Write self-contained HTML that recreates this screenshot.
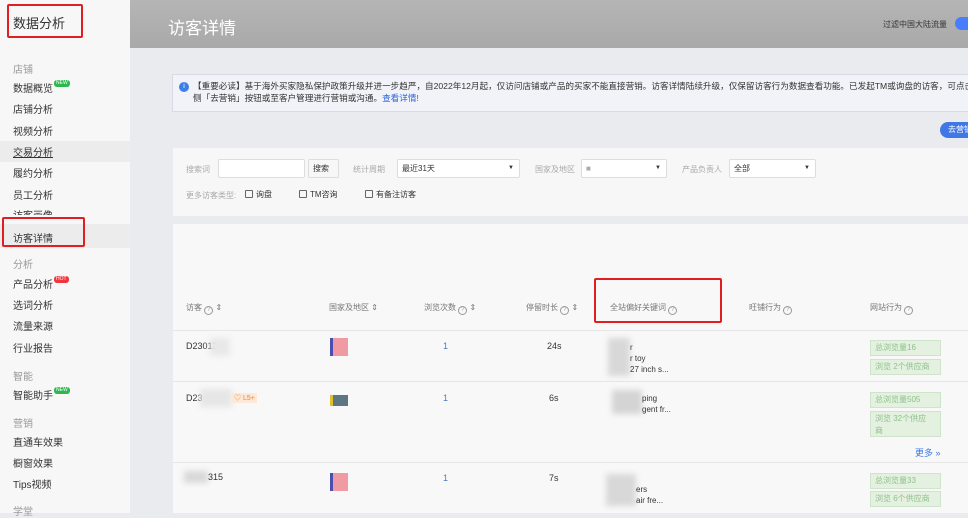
<!DOCTYPE html>
<html><head><meta charset="utf-8"><style>
*{margin:0;padding:0;box-sizing:border-box}
body{width:968px;height:513px;overflow:hidden;position:relative;background:#eaebee;font-family:"Liberation Sans","Noto Sans CJK SC",sans-serif;color:#333}
.a{position:absolute;white-space:nowrap}
#side{position:absolute;left:0;top:0;width:130px;height:513px;background:#f7f7f7}
.s{position:absolute;left:13px;font-size:10px;color:#333}
.g{position:absolute;left:13px;font-size:10px;color:#999}
.new{display:inline-block;background:#2db84d;color:#fff;font-size:5px;border-radius:3px;padding:0 2px;vertical-align:top;margin-left:1px;line-height:7px}
.hot{background:#f0353d}
.red{position:absolute;border:2px solid #e02020;border-radius:2px}
.h{font-size:8px;color:#777}
.q{display:inline-block;width:9px;height:9px;border:1px solid #999;border-radius:50%;font-size:6px;line-height:7px;text-align:center;color:#999;vertical-align:-1px}
.tag{position:absolute;left:870px;width:71px;background:#e4f1e1;border:1px solid #cfe5cb;color:#8fc08a;font-size:8px;padding:1px 4px;line-height:12px}
.blur{position:absolute;background:#ddd;filter:blur(3px)}
.inp{position:absolute;height:19px;background:#fff;border:1px solid #ddd;border-radius:2px;font-size:8px;line-height:17px;padding-left:4px}
.cb{display:inline-block;width:8px;height:8px;border:1px solid #666;border-radius:1px;vertical-align:-1px;margin-right:3px}
</style></head><body>
<div id="side">
<div class="a" style="left:13px;top:13px;font-size:13px;color:#333">数据分析</div>
<div class="red" style="left:7px;top:4px;width:76px;height:34px"></div>
<div class="g" style="top:61px">店铺</div>
<div class="s" style="top:80px">数据概览<span class="new">NEW</span></div>
<div class="s" style="top:101px">店铺分析</div>
<div class="s" style="top:123px">视频分析</div>
<div style="position:absolute;left:0;top:141px;width:130px;height:21px;background:#ececec"></div>
<div class="s" style="top:144px;text-decoration:underline">交易分析</div>
<div class="s" style="top:165px">履约分析</div>
<div class="s" style="top:187px">员工分析</div>
<div class="s" style="top:207px;height:8px;overflow:hidden">访客画像</div>
<div style="position:absolute;left:0;top:224px;width:130px;height:24px;background:#ececec"></div>
<div class="s" style="top:230px">访客详情</div>
<div class="red" style="left:2px;top:217px;width:83px;height:30px"></div>
<div class="g" style="top:256px">分析</div>
<div class="s" style="top:276px">产品分析<span class="new hot">HOT</span></div>
<div class="s" style="top:297px">选词分析</div>
<div class="s" style="top:318px">流量来源</div>
<div class="s" style="top:340px">行业报告</div>
<div class="g" style="top:368px">智能</div>
<div class="s" style="top:387px">智能助手<span class="new">NEW</span></div>
<div class="g" style="top:415px">营销</div>
<div class="s" style="top:434px">直通车效果</div>
<div class="s" style="top:455px">橱窗效果</div>
<div class="s" style="top:476px">Tips视频</div>
<div class="g" style="top:503px">学堂</div>
</div>
<div style="position:absolute;left:130px;top:0;width:838px;height:48px;background:linear-gradient(#b5b5b5,#a9a9a9)"></div>
<div class="a" style="left:168px;top:14px;font-size:17px;color:#fff">访客详情</div>
<div class="a" style="left:883px;top:19px;font-size:8px;color:#333">过滤中国大陆流量</div>
<div style="position:absolute;left:955px;top:17px;width:20px;height:13px;border-radius:7px;background:#4a7dfc"></div>
<div style="position:absolute;left:172px;top:74px;width:800px;height:38px;background:#f1f3f8;border:1px solid #d6dbe6"></div>
<div style="position:absolute;left:179px;top:82px;width:10px;height:10px;border-radius:50%;background:#3d7ee8;color:#fff;font-size:7px;text-align:center;line-height:10px">i</div>
<div class="a" style="left:193px;top:80px;font-size:8.6px;line-height:12px;color:#333;width:790px;overflow:hidden">【重要必读】基于海外买家隐私保护政策升级并进一步趋严，自2022年12月起，仅访问店铺或产品的买家不能直接营销。访客详情陆续升级，仅保留访客行为数据查看功能。已发起TM或询盘的访客，可点击<br>侧「去营销」按钮或至客户管理进行营销或沟通。<span style="color:#2b63d8">查看详情!</span></div>
<div style="position:absolute;left:940px;top:122px;width:40px;height:16px;border-radius:8px;background:#3f77e6;color:#fff;font-size:8px;line-height:16px;padding-left:8px">去营销</div>
<div style="position:absolute;left:173px;top:148px;width:800px;height:68px;background:#f7f7f7"></div>
<div class="a h" style="left:186px;top:164px;color:#aaa">搜索词</div>
<div class="inp" style="left:218px;top:159px;width:87px"></div>
<div class="inp" style="left:308px;top:159px;width:31px;background:#f7f7f7;color:#333">搜索</div>
<div class="a h" style="left:353px;top:164px;color:#aaa">统计周期</div>
<div class="inp" style="left:397px;top:159px;width:123px">最近31天<span style="position:absolute;right:5px;font-size:6px">▼</span></div>
<div class="a h" style="left:535px;top:164px;color:#aaa">国家及地区</div>
<div class="inp" style="left:581px;top:159px;width:86px;color:#aaa">■<span style="position:absolute;right:5px;font-size:6px;color:#333">▼</span></div>
<div class="a h" style="left:682px;top:164px;color:#aaa">产品负责人</div>
<div class="inp" style="left:729px;top:159px;width:87px">全部<span style="position:absolute;right:5px;font-size:6px">▼</span></div>
<div class="a h" style="left:186px;top:190px;color:#aaa">更多访客类型:</div>
<div class="a" style="left:245px;top:189px;font-size:8px"><span class="cb"></span>询盘</div>
<div class="a" style="left:299px;top:189px;font-size:8px"><span class="cb"></span>TM咨询</div>
<div class="a" style="left:365px;top:189px;font-size:8px"><span class="cb"></span>有备注访客</div>
<div style="position:absolute;left:173px;top:224px;width:800px;height:289px;background:#f8f8f8"></div>
<div class="a h" style="left:186px;top:302px">访客 <span class="q">?</span> ⇕</div>
<div class="a h" style="left:329px;top:302px">国家及地区 ⇕</div>
<div class="a h" style="left:424px;top:302px">浏览次数 <span class="q">?</span> ⇕</div>
<div class="a h" style="left:526px;top:302px">停留时长 <span class="q">?</span> ⇕</div>
<div class="a h" style="left:610px;top:302px">全站偏好关键词 <span class="q">?</span></div>
<div class="a h" style="left:749px;top:302px">旺铺行为 <span class="q">?</span></div>
<div class="a h" style="left:870px;top:302px">网站行为 <span class="q">?</span></div>
<div class="red" style="left:594px;top:278px;width:128px;height:45px"></div>
<div style="position:absolute;left:173px;top:330px;width:800px;height:1px;background:#e6e6e6"></div>
<div style="position:absolute;left:173px;top:381px;width:800px;height:1px;background:#e6e6e6"></div>
<div style="position:absolute;left:173px;top:462px;width:800px;height:1px;background:#e6e6e6"></div>
<div class="a" style="left:186px;top:341px;font-size:9px">D23013</div>
<div class="blur" style="left:210px;top:338px;width:20px;height:18px;background:#e8e8e8"></div>
<div style="position:absolute;left:330px;top:338px;width:18px;height:18px;background:linear-gradient(90deg,#4a4fb0 0 3px,#f09aa4 3px);"></div>
<div class="a" style="left:443px;top:341px;font-size:9px;color:#4a7dc8">1</div>
<div class="a" style="left:547px;top:341px;font-size:9px">24s</div>
<div class="blur" style="left:608px;top:338px;width:22px;height:38px;background:#d8d8d8"></div>
<div class="a" style="left:630px;top:342px;font-size:8px;line-height:11px">r<br>r toy<br>27 inch s...</div>
<div class="tag" style="top:340px">总浏览量16</div>
<div class="tag" style="top:359px">浏览 2个供应商</div>
<div class="a" style="left:186px;top:393px;font-size:9px">D23</div>
<div class="blur" style="left:200px;top:389px;width:32px;height:18px;background:#e6e6e6"></div>
<div class="a" style="left:232px;top:393px;font-size:7px;color:#f08030;background:#fde9d8;padding:0 2px">♡ L5+</div>
<div style="position:absolute;left:330px;top:395px;width:18px;height:11px;background:#5c7782;border-left:3px solid #e0c030"></div>
<div class="a" style="left:443px;top:393px;font-size:9px;color:#4a7dc8">1</div>
<div class="a" style="left:549px;top:393px;font-size:9px">6s</div>
<div class="blur" style="left:612px;top:390px;width:30px;height:24px;background:#d4d4d4"></div>
<div class="a" style="left:642px;top:393px;font-size:8px;line-height:11px">ping<br>gent fr...</div>
<div class="tag" style="top:392px">总浏览量505</div>
<div class="tag" style="top:411px;height:26px">浏览 32个供应<br>商</div>
<div class="a" style="left:915px;top:446px;font-size:9px;color:#3f77e6">更多 »</div>
<div class="blur" style="left:184px;top:471px;width:24px;height:12px;background:#d8d8d8"></div>
<div class="a" style="left:208px;top:472px;font-size:9px">315</div>
<div style="position:absolute;left:330px;top:473px;width:18px;height:18px;background:linear-gradient(90deg,#4a4fb0 0 3px,#f09aa4 3px);"></div>
<div class="a" style="left:443px;top:473px;font-size:9px;color:#4a7dc8">1</div>
<div class="a" style="left:549px;top:473px;font-size:9px">7s</div>
<div class="blur" style="left:606px;top:474px;width:30px;height:32px;background:#d8d8d8"></div>
<div class="a" style="left:636px;top:484px;font-size:8px;line-height:11px">ers<br>air fre...</div>
<div class="tag" style="top:473px">总浏览量33</div>
<div class="tag" style="top:491px">浏览 6个供应商</div>
</body></html>
